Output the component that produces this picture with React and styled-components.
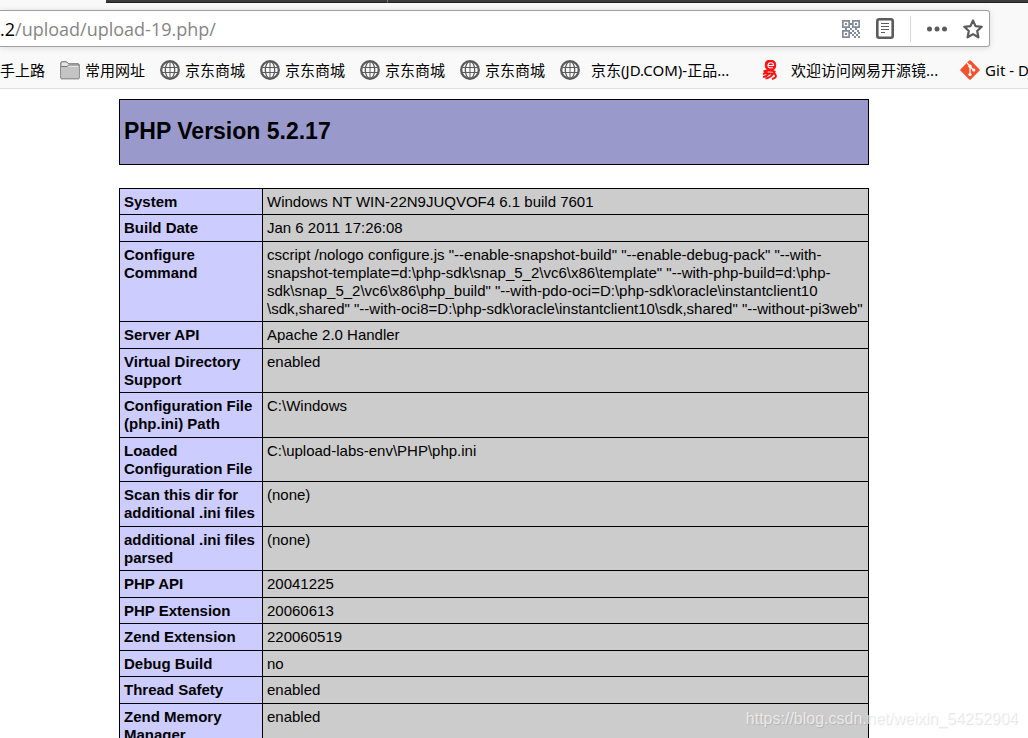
import React from 'react';
import styled, { createGlobalStyle } from 'styled-components';

const colors = {
  toolbar: '#f9f9fa',
  icon: '#5b5b5b',
  header: '#9999cc',
  label: '#ccccff',
  value: '#cccccc',
};

const bookmarks = [
  { icon: 'folder', text: '常用网址' },
  { icon: 'globe', text: '京东商城' },
  { icon: 'globe', text: '京东商城' },
  { icon: 'globe', text: '京东商城' },
  { icon: 'globe', text: '京东商城' },
  { icon: 'globe', text: '京东(JD.COM)-正品...', wide: true },
  { icon: 'netease', text: '欢迎访问网易开源镜...', wide: true },
  { icon: 'git', text: 'Git - D' },
];

const rows = [
  ['System', 'Windows NT WIN-22N9JUQVOF4 6.1 build 7601'],
  ['Build Date', 'Jan 6 2011 17:26:08'],
  [
    'Configure Command',
    [
      'cscript /nologo configure.js "--enable-snapshot-build" "--enable-debug-pack" "--with-',
      'snapshot-template=d:\\php-sdk\\snap_5_2\\vc6\\x86\\template" "--with-php-build=d:\\php-',
      'sdk\\snap_5_2\\vc6\\x86\\php_build" "--with-pdo-oci=D:\\php-sdk\\oracle\\instantclient10',
      '\\sdk,shared" "--with-oci8=D:\\php-sdk\\oracle\\instantclient10\\sdk,shared" "--without-pi3web"',
    ].join('\n'),
  ],
  ['Server API', 'Apache 2.0 Handler'],
  ['Virtual Directory Support', 'enabled'],
  ['Configuration File (php.ini) Path', 'C:\\Windows'],
  ['Loaded Configuration File', 'C:\\upload-labs-env\\PHP\\php.ini'],
  ['Scan this dir for additional .ini files', '(none)'],
  ['additional .ini files parsed', '(none)'],
  ['PHP API', '20041225'],
  ['PHP Extension', '20060613'],
  ['Zend Extension', '220060519'],
  ['Debug Build', 'no'],
  ['Thread Safety', 'enabled'],
  ['Zend Memory Manager', 'enabled'],
];

const FolderIcon = () => (
  <svg width='20' height='20' viewBox='0 0 20 20'>
    <path d='M.8 18V3Q.8 1.800 2 1.800h4.500l2 2h9.500q1.200 0 1.200 1.200v13q0 .8-.8.8H1.600Q.8 18.800.8 18Z' fill='#e4e4e4' stroke='#666' />
    <path d='M1.500 7h17v11.200h-17z' fill='#c4c4c4' />
    <path d='M1 6.500h6l2-1.500h10' fill='none' stroke='#777' />
  </svg>
);

const GlobeIcon = () => (
  <svg width='20' height='20' viewBox='0 0 20 20' fill='none' stroke='#5b5b5b'>
    <circle cx='10' cy='10' r='8.800' strokeWidth='2.300' />
    <ellipse cx='10' cy='10' rx='4.700' ry='8.500' strokeWidth='1.300' />
    <path d='M10 1v18M2.500 7.500h15M2 12.500h16' strokeWidth='1' />
  </svg>
);

const NeteaseIcon = () => (
  <svg width='20' height='20' viewBox='0 0 20 20' fill='none' stroke='#ff1010'>
    <path d='M6 1.500 8 .5h5l2 1.500.8 3-.8 3.500-2 1.500H8L6 8.500 5.200 5Z' fill='#ff1010' />
    <path d='M8 5.500h5.500Q13.500 2.800 10.800 2.800T8 5.500t3 2.300h2' stroke='#fff' strokeWidth='1.100' />
    <path d='M3.500 11.500Q9 9.500 15.500 12M7.500 11Q6 13.500 3 14M5.500 13.500h9q4 4-2.500 5.500' strokeWidth='2' />
    <path d='M9 13.500q-2 3-6 3.500M13 13.500q-2 4-7.500 5' strokeWidth='1.800' />
  </svg>
);

const GitIcon = () => (
  <svg width='20' height='20' viewBox='0 0 20 20'>
    <path d='M9.200.6q.8-.8 1.600 0l8.600 8.600q.8.8 0 1.600l-8.600 8.600q-.8.8-1.600 0L.6 10.800q-.8-.8 0-1.600Z' fill='#f4512c' />
    <path d='M7 3 10 6v9M10 6.500l3.500 3.500' stroke='#fff' strokeWidth='1.300' fill='none' />
    <g fill='#fff'>
      <circle cx='10' cy='6.200' r='1.600' />
      <circle cx='10' cy='14.500' r='1.600' />
      <circle cx='13.800' cy='10' r='1.600' />
    </g>
  </svg>
);

const QrIcon = () => (
  <svg width='18' height='18' viewBox='0 0 18 18' fill='#828b9a'>
    <path
      fillRule='evenodd'
      d='M0 0h8v8H0zM1.700 1.700v4.600h4.600V1.700zM10 0h8v8h-8zM11.700 1.700v4.600h4.600V1.700zM0 10h8v8H0zM1.700 11.700v4.600h4.600v-4.600z'
    />
    <path d='M3 3h2v2H3zM13 3h2v2h-2zM3 13h2v2H3zM8 3h2v2H8zM3 8h2v2H3zM8 8h2v2H8zM13 8h2v2h-2zM10 10h2v2h-2zM15 10h2v2h-2zM12 12h2v2h-2zM16 12h2v2h-2zM10 14h2v2h-2zM14 14h2v2h-2zM12 16h2v2h-2zM16 16h2v2h-2zM8 12h2v2H8z' />
  </svg>
);

const ReaderIcon = () => (
  <svg width='18' height='21' viewBox='0 0 18 21' fill='none' stroke={colors.icon}>
    <rect x='1.300' y='1.300' width='15.400' height='18.400' rx='2' strokeWidth='2.600' />
    <path d='M5 5.500h8M5 8.500h8M5 11.500h8M5 14.500h4' strokeWidth='1.200' />
  </svg>
);

const DotsIcon = () => (
  <svg width='20' height='6' viewBox='0 0 20 6' fill={colors.icon}>
    <circle cx='2.500' cy='3' r='2.500' />
    <circle cx='10' cy='3' r='2.500' />
    <circle cx='17.500' cy='3' r='2.500' />
  </svg>
);

const StarIcon = () => (
  <svg width='20' height='20' viewBox='0 0 20 20'>
    <path
      d='m10 1.500 2.500 5.600 6.200.7-4.500 4.200 1.200 6.300-5.400-3.200-5.400 3.200 1.200-6.300L1.300 7.800l6.200-.7Z'
      fill='none'
      stroke={colors.icon}
      strokeWidth='2.200'
      strokeLinejoin='round'
    />
  </svg>
);

const icons = {
  folder: FolderIcon,
  globe: GlobeIcon,
  netease: NeteaseIcon,
  git: GitIcon,
};

const BookmarkItem = ({ icon, text, wide }) => {
  const Icon = icons[icon];
  return (
    <StBookmark href='#' $wide={wide}>
      <Icon />
      {text}
    </StBookmark>
  );
};

const App = () => {
  return (
    <StPage>
      <GlobalStyle />
      <StTabStrip>
        <StTab />
        <StTab $grow />
      </StTabStrip>
      <StToolbar>
        <StUrlBar>
          <StHost>.2</StHost>
          <StUrlInput aria-label='URL' defaultValue='/upload/upload-19.php/' />
          <StUrlActions>
            <StIconButton aria-label='QR'>
              <QrIcon />
            </StIconButton>
            <StIconButton aria-label='Reader'>
              <ReaderIcon />
            </StIconButton>
            <StDivider />
            <StIconButton aria-label='More'>
              <DotsIcon />
            </StIconButton>
            <StIconButton aria-label='Bookmark'>
              <StarIcon />
            </StIconButton>
          </StUrlActions>
        </StUrlBar>
        <StBookmarks>
          <StBookmark href='#'>手上路</StBookmark>
          {bookmarks.map((item, index) => (
            <BookmarkItem key={index} {...item} />
          ))}
        </StBookmarks>
      </StToolbar>
      <StContent>
        <StVersion>
          <h1>PHP Version 5.2.17</h1>
        </StVersion>
        <StTable>
          <tbody>
            {rows.map(([label, value]) => (
              <StRow key={label}>
                <StLabel scope='row'>{label}</StLabel>
                <StValue>{value}</StValue>
              </StRow>
            ))}
          </tbody>
        </StTable>
      </StContent>
      <StWatermark>https://blog.csdn.net/weixin_54252904</StWatermark>
    </StPage>
  );
};

export default App;

const GlobalStyle = createGlobalStyle`
  * {
    box-sizing: border-box;
  }

  body {
    margin: 0;
    background: #fff;
    color: #000;
    font-family: 'Liberation Sans', Arial, sans-serif;
  }
`;

const StPage = styled.div`
  position: relative;
  height: 100vh;
  overflow: hidden;
`;

const StTabStrip = styled.div`
  display: flex;
  height: 3px;
  padding-left: 106px;
  background: ${colors.toolbar};
`;

const StTab = styled.div`
  flex: ${({ $grow }) => ($grow ? '1' : '0 0 282px')};
  border-right: ${({ $grow }) => ($grow ? '0' : '1px solid #777')};
  border-bottom: 1px solid #222;
  background: #3c3c3c;
`;

const StToolbar = styled.header`
  padding-top: 7px;
  border-bottom: 1px solid #dedede;
  background: ${colors.toolbar};
  font-family: 'Noto Sans', 'Noto Sans CJK SC', sans-serif;
`;

const StUrlBar = styled.div`
  display: flex;
  align-items: center;
  height: 37px;
  margin-right: 38px;
  padding-right: 6px;
  border: 1px solid #a0a0a0;
  border-left: 0;
  border-radius: 0 3px 3px 0;
  background: #fff;
  box-shadow: 0 1px 6px rgba(0, 0, 0, 0.12);
  font-family: 'Open Sans', sans-serif;
  font-size: 18px;
`;

const StHost = styled.span`
  color: #000;
`;

const StUrlInput = styled.input`
  flex: 1;
  min-width: 0;
  padding: 0;
  border: 0;
  outline: 0;
  background: transparent;
  color: #858585;
  font: inherit;
`;

const StUrlActions = styled.div`
  display: flex;
  align-items: center;
  gap: 16px;
`;

const StIconButton = styled.button`
  display: flex;
  padding: 0;
  border: 0;
  background: transparent;
`;

const StDivider = styled.span`
  width: 1px;
  height: 26px;
  background: #d8d8d8;
`;

const StBookmarks = styled.nav`
  display: flex;
  align-items: center;
  gap: 15px;
  height: 41px;
  padding-top: 6px;
  padding-bottom: 2px;
  overflow: hidden;
`;

const StBookmark = styled.a`
  display: flex;
  flex: none;
  align-items: center;
  gap: ${({ $wide }) => ($wide ? '11px' : '5px')};
  width: ${({ $wide }) => ($wide ? '185px' : 'auto')};
  color: #000;
  font-size: 15px;
  line-height: 22px;
  text-decoration: none;
  white-space: nowrap;
`;

const StContent = styled.main`
  max-width: 790px;
  margin: 10px auto 0;
  padding-right: 40px;
`;

const StVersion = styled.div`
  height: 66px;
  padding: 18px 4px;
  border: 1px solid #000;
  background: ${colors.header};

  h1 {
    margin: 0;
    font-size: 23px;
    line-height: 26px;
  }
`;

const StTable = styled.table`
  width: 100%;
  margin-top: 23px;
  border-collapse: collapse;
  table-layout: fixed;
  font-size: 15px;
  line-height: 18px;
`;

const StLabel = styled.th`
  width: 143px;
  padding: 4px 4px 3px;
  border: 1px solid #000;
  background: ${colors.label};
  text-align: left;
  vertical-align: top;
`;

const StValue = styled.td`
  padding: 4px 4px 3px;
  border: 1px solid #000;
  background: ${colors.value};
  vertical-align: top;
  white-space: pre;
`;

const StRow = styled.tr`
  &:nth-child(even) > * {
    padding-bottom: 4px;
  }
`;

const StWatermark = styled.div`
  position: absolute;
  right: 10px;
  bottom: 8px;
  color: rgba(255, 255, 255, 0.65);
  font-size: 16px;
  line-height: 22px;
  text-shadow: 1px 1px 1px rgba(0, 0, 0, 0.12);
`;
